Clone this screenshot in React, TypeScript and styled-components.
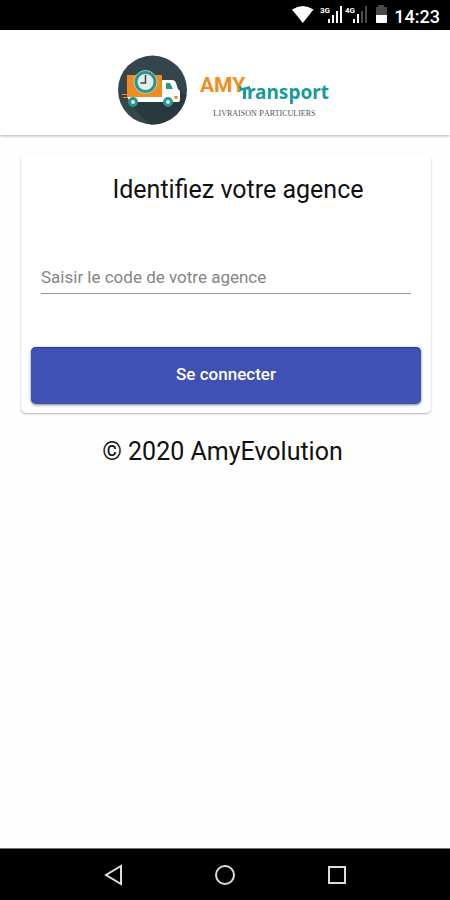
import React from "react";
import styled, { createGlobalStyle } from "styled-components";

const GlobalStyle = createGlobalStyle`
  * { box-sizing: border-box; }
  body {
    margin: 0;
    background: #fefefe;
    color: #111;
    font-family: Roboto, "Liberation Sans", sans-serif;
  }
`;

const Page = styled.div`
  display: flex;
  flex-direction: column;
  min-height: 100vh;
`;

const StatusBar = styled.div`
  display: flex;
  align-items: center;
  justify-content: flex-end;
  height: 30px;
  padding: 0 10px;
  background: #000;
  color: #fff;
`;

const Clock = styled.time`
  margin-left: 4px;
  padding-top: 3px;
  font-size: 18px;
  line-height: 20px;
  font-weight: 500;
`;

const Header = styled.header`
  display: flex;
  align-items: center;
  justify-content: center;
  height: 105px;
  padding: 14px 2px 0 0;
  background: #fff;
  box-shadow: 0 1px 3px rgba(0, 0, 0, 0.3);
`;

const Main = styled.main`
  flex: 1;
  padding: 20px 19px 20px 21px;
`;

const Card = styled.form`
  display: flex;
  flex-direction: column;
  padding: 19px 10px 9px;
  border-radius: 5px;
  background: #fff;
  box-shadow: 0 1px 2px rgba(0, 0, 0, 0.3);
`;

const Title = styled.h1`
  margin: 0 0 54px;
  padding-left: 24px;
  font-size: 25px;
  line-height: 32px;
  font-weight: 400;
  text-align: center;
`;

const CodeInput = styled.input`
  margin: 0 10px 53px;
  padding: 0;
  height: 34px;
  border: 0;
  border-bottom: 1px solid #999;
  border-radius: 0;
  outline: 0;
  background: transparent;
  color: #222;
  font: 400 17px/24px Roboto, "Liberation Sans", sans-serif;

  &::placeholder {
    color: #858585;
    opacity: 1;
  }
`;

const SubmitButton = styled.button`
  height: 57px;
  padding: 0 0 3px;
  border: 0;
  border-radius: 5px;
  background: #3f51b5;
  color: #fff;
  font: 500 17px/24px Roboto, "Liberation Sans", sans-serif;
  box-shadow: 0 1px 3px rgba(0, 0, 0, 0.5), inset 0 1px 1px #2a3ba0;
`;

const Copyright = styled.p`
  margin: 23px 0 0;
  padding-right: 7px;
  font-size: 25px;
  line-height: 32px;
  text-align: center;
`;

const NavBar = styled.nav`
  display: flex;
  align-items: center;
  justify-content: center;
  gap: 88px;
  height: 52px;
  border-top: 1px solid #777;
  background: #000;
`;

const NavButton = styled.button`
  display: flex;
  width: 24px;
  height: 24px;
  padding: 0;
  border: 0;
  background: none;
`;

const StatusIcons = () => (
  <svg width="98" height="24" viewBox="292 4 98 24" role="img" aria-label="Wi-Fi, signal, batterie">
    <path d="M292 10.5Q303 3.5 313.500 10.5L302.800 24Z" fill="#fff" />
    <g fill="#fff" fontFamily="Roboto, sans-serif" fontSize="8" fontWeight="700">
      <text x="320" y="14">3G</text>
      <text x="345" y="14">4G</text>
    </g>
    <g fill="#fff">
      <rect x="328" y="20" width="2" height="4" />
      <rect x="332" y="16" width="2" height="8" />
      <rect x="336" y="12" width="2" height="12" />
      <rect x="340" y="7" width="2" height="17" />
      <rect x="353" y="20" width="2" height="4" />
      <rect x="357" y="15" width="2" height="9" />
    </g>
    <g fill="#4a4a4a">
      <rect x="361" y="12" width="2" height="12" />
      <rect x="365" y="7" width="2" height="17" />
      <path d="M378 6h6v2h3v9h-11V8h2z" />
    </g>
    <path d="M376 16h11v7q0 1-1 1h-9q-1 0-1-1z" fill="#fff" />
  </svg>
);

const Logo = () => (
  <svg width="214" height="72" viewBox="117 54 214 72" role="img" aria-label="AMY Transport, Livraison Particuliers">
    <circle cx="152.500" cy="90" r="34.500" fill="#34454b" />
    <path d="M128 102l22 22.400A34.500 34.500 0 0 0 186.500 95L178 88z" fill="#2a393f" />
    <path d="M127 75h35v22h-35z" fill="#f28c1e" />
    <path d="M122 94h6v1h-6zM123 97h6v1h-6z" fill="#f28c1e" />
    <path d="M128 97h34V80h10q3 0 4 3l2 6q2 1 2 3v8q0 2-2 2h-47q-3-1-3-5z" fill="#fff" />
    <path d="M166 83h4l3 6h-7z" fill="#23988f" />
    <path d="M174 96h4l-1 3h-2z" fill="#f28c1e" />
    <g fill="#e4eeee" stroke="#23988f" strokeWidth="3">
      <circle cx="133" cy="102" r="3.500" />
      <circle cx="168" cy="102" r="3.500" />
      <circle cx="145.500" cy="82" r="9.500" />
    </g>
    <circle cx="145.500" cy="82" r="11.500" fill="none" stroke="#a5cfca" />
    <path d="M145.500 75v8h-5" fill="none" stroke="#34454b" strokeWidth="1.500" />
    <text x="200" y="92" fill="#f28c1e" fontFamily="Roboto, sans-serif" fontSize="21" fontWeight="700">AMY</text>
    <path d="M237 87l4-1 1 2 8-2v3l-4 1v9h-3v-9l-4 2 1-4z" fill="#169b99" />
    <text x="247" y="99" fill="#169b99" fontFamily="'Noto Sans', sans-serif" fontSize="19" fontWeight="700">ransport</text>
    <text x="213" y="116" fill="#555" fontFamily="'Liberation Serif', serif" fontSize="9">
      L<tspan fontSize="8">IVRAISON</tspan> P<tspan fontSize="8">ARTICULIERS</tspan>
    </text>
  </svg>
);

const NavGlyph = ({ d }: { d: string }) => (
  <svg width="24" height="24" viewBox="0 0 24 24" fill="none" stroke="#ddd" strokeWidth="2" aria-hidden="true">
    <path d={d} />
  </svg>
);

export default function App() {
  return (
    <Page>
      <GlobalStyle />
      <StatusBar>
        <StatusIcons />
        <Clock>14:23</Clock>
      </StatusBar>
      <Header>
        <Logo />
      </Header>
      <Main>
        <Card onSubmit={(event) => event.preventDefault()}>
          <Title>Identifiez votre agence</Title>
          <CodeInput type="text" aria-label="Code de votre agence" placeholder="Saisir le code de votre agence" />
          <SubmitButton type="submit">Se connecter</SubmitButton>
        </Card>
        <Copyright>© 2020 AmyEvolution</Copyright>
      </Main>
      <NavBar>
        <NavButton type="button" aria-label="Retour">
          <NavGlyph d="M20 3v18L5 12z" />
        </NavButton>
        <NavButton type="button" aria-label="Accueil">
          <NavGlyph d="M21 12a9 9 0 1 1-18 0a9 9 0 1 1 18 0z" />
        </NavButton>
        <NavButton type="button" aria-label="Applications récentes">
          <NavGlyph d="M4 4h16v16H4z" />
        </NavButton>
      </NavBar>
    </Page>
  );
}
